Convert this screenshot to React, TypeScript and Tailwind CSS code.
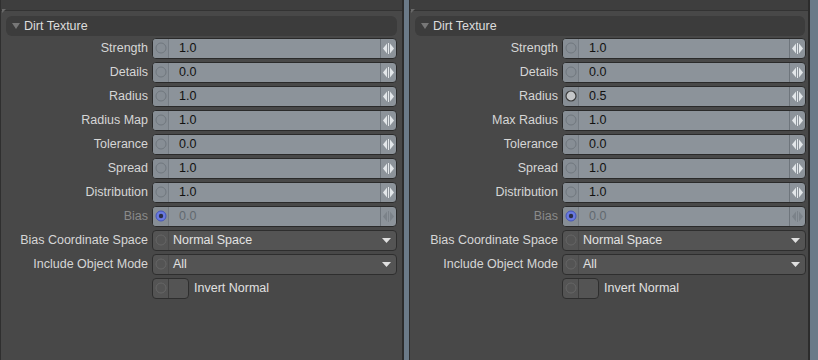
import React from "react";

type Row =
  | { kind: "num"; label: string; value: string; dot?: "ring" | "filled" | "blue"; disabled?: boolean }
  | { kind: "select"; label: string; value: string }
  | { kind: "check"; label: string };

const Arrows = ({ faded }: { faded?: boolean }) => (
  <svg width="11" height="11" viewBox="0 0 11 11">
    <polygon points="4,0.5 4,10.5 0,5.5" fill={faded ? "#7b8289" : "#e3e7ea"} />
    <rect x="5" y="0" width="1" height="11" fill={faded ? "#7b8289" : "#e3e7ea"} />
    <polygon points="7,0.5 7,10.5 11,5.5" fill={faded ? "#7b8289" : "#e3e7ea"} />
  </svg>
);

const Dot = ({ kind }: { kind?: "ring" | "filled" | "blue" }) => {
  if (kind === "filled")
    return (
      <svg width="12" height="12" viewBox="0 0 12 12">
        <circle cx="6" cy="6" r="5" fill="#c4c6c8" stroke="#3a3a3a" strokeWidth="1.2" />
      </svg>
    );
  if (kind === "blue")
    return (
      <svg width="12" height="12" viewBox="0 0 12 12">
        <circle cx="6" cy="6" r="5" fill="#6a7ae0" stroke="#4454b8" strokeWidth="1" />
        <circle cx="6" cy="6" r="2.2" fill="#2c2f46" />
      </svg>
    );
  return (
    <svg width="12" height="12" viewBox="0 0 12 12">
      <circle cx="6" cy="6" r="5" fill="none" stroke="#70777e" strokeWidth="1" />
    </svg>
  );
};

const DarkDot = () => (
  <svg width="12" height="12" viewBox="0 0 12 12">
    <circle cx="6" cy="6" r="5" fill="none" stroke="#666" strokeWidth="1" />
  </svg>
);

function Field({ row, fw }: { row: Row; fw: number }) {
  if (row.kind === "num") {
    return (
      <div
        className="flex h-[21px] rounded-[4px] border border-[#2a2a2a] bg-[#8c939a] overflow-hidden"
        style={{ width: fw }}
      >
        <div className="w-[16px] flex items-center justify-center border-r border-[#767d84] bg-[#878e95]">
          <Dot kind={row.dot} />
        </div>
        <div
          className={
            "flex-1 flex items-center pl-[10px] text-[12.5px] " +
            (row.disabled ? "text-[#62696f]" : "text-[#111111]")
          }
        >
          {row.value}
        </div>
        <div className="w-[16px] flex items-center justify-center border-l border-[#6e757c]">
          <Arrows faded={row.disabled} />
        </div>
      </div>
    );
  }
  if (row.kind === "select") {
    return (
      <div
        className="flex h-[21px] rounded-[4px] border border-[#2e2e2e] bg-[#545454] overflow-hidden"
        style={{ width: fw }}
      >
        <div className="w-[16px] flex items-center justify-center border-r border-[#4a4a4a]">
          <DarkDot />
        </div>
        <div className="flex-1 flex items-center pl-[4px] text-[12.5px] text-[#e2e2e2]">{row.value}</div>
        <div className="w-[16px] flex items-center justify-center pr-[4px]">
          <svg width="9" height="5" viewBox="0 0 9 5">
            <polygon points="0,0 9,0 4.5,5" fill="#e0e0e0" />
          </svg>
        </div>
      </div>
    );
  }
  return (
    <div className="flex items-center">
      <div className="flex h-[21px] w-[37px] rounded-[4px] border border-[#2e2e2e] bg-[#545454] overflow-hidden">
        <div className="w-[16px] flex items-center justify-center border-r border-[#3e3e3e]">
          <DarkDot />
        </div>
        <div className="flex-1" />
      </div>
      <span className="ml-[5px] text-[12.5px] text-[#e0e0e0]">{row.label}</span>
    </div>
  );
}

function Panel({ rows, lw, fw, hw }: { rows: Row[]; lw: number; fw: number; hw: number }) {
  return (
    <div className="flex flex-col h-full">
      <div className="h-[11px] bg-[#3e3e3e] border-b border-[#333333] relative">
        <svg className="absolute left-[1px] top-[9px]" width="4" height="4" viewBox="0 0 4 4">
          <polygon points="0,0 4,0 0,4" fill="#6a6a6a" />
        </svg>
      </div>
      <div className="pt-[5px] flex-1">
        <div
          className="ml-[5px] h-[20px] rounded-[6px] bg-[#3c3c3c] flex items-center"
          style={{ width: hw }}
        >
          <svg className="ml-[6px]" width="8" height="6" viewBox="0 0 8 6">
            <polygon points="0,0 8,0 4,6" fill="#777777" />
          </svg>
          <span className="ml-[4px] text-[12.5px] text-[#dcdcdc]">Dirt Texture</span>
        </div>
        {rows.map((r, i) => (
          <div key={i} className="flex h-[24px] items-center">
            <div
              className={
                "text-right pr-[4px] text-[12.5px] " +
                (r.kind === "num" && r.disabled ? "text-[#8a8a8a]" : "text-[#d6d6d6]")
              }
              style={{ width: lw }}
            >
              {r.kind === "check" ? "" : r.label}
            </div>
            <Field row={r} fw={fw} />
          </div>
        ))}
      </div>
    </div>
  );
}

const leftRows: Row[] = [
  { kind: "num", label: "Strength", value: "1.0" },
  { kind: "num", label: "Details", value: "0.0" },
  { kind: "num", label: "Radius", value: "1.0" },
  { kind: "num", label: "Radius Map", value: "1.0" },
  { kind: "num", label: "Tolerance", value: "0.0" },
  { kind: "num", label: "Spread", value: "1.0" },
  { kind: "num", label: "Distribution", value: "1.0" },
  { kind: "num", label: "Bias", value: "0.0", dot: "blue", disabled: true },
  { kind: "select", label: "Bias Coordinate Space", value: "Normal Space" },
  { kind: "select", label: "Include Object Mode", value: "All" },
  { kind: "check", label: "Invert Normal" },
];

const rightRows: Row[] = [
  { kind: "num", label: "Strength", value: "1.0" },
  { kind: "num", label: "Details", value: "0.0" },
  { kind: "num", label: "Radius", value: "0.5", dot: "filled" },
  { kind: "num", label: "Max Radius", value: "1.0" },
  { kind: "num", label: "Tolerance", value: "0.0" },
  { kind: "num", label: "Spread", value: "1.0" },
  { kind: "num", label: "Distribution", value: "1.0" },
  { kind: "num", label: "Bias", value: "0.0", dot: "blue", disabled: true },
  { kind: "select", label: "Bias Coordinate Space", value: "Normal Space" },
  { kind: "select", label: "Include Object Mode", value: "All" },
  { kind: "check", label: "Invert Normal" },
];

export default function App() {
  return (
    <div
      className="flex w-[818px] h-[360px] bg-[#484848] overflow-hidden"
      style={{ fontFamily: '"Liberation Sans", Arial, sans-serif' }}
    >
      <div className="w-[402px] h-full border-l border-[#2f2f2f] shrink-0">
        <Panel rows={leftRows} lw={151} fw={245} hw={391} />
      </div>
      <div className="w-[2px] h-full bg-[#2c2c2c] shrink-0" />
      <div className="w-[5px] h-full bg-[#6b7a88] shrink-0" />
      <div className="w-[1px] h-full bg-[#2c2c2c] shrink-0" />
      <div className="w-[398px] h-full shrink-0">
        <Panel rows={rightRows} lw={152} fw={244} hw={390} />
      </div>
      <div className="w-[2px] h-full bg-[#2c2c2c] shrink-0" />
      <div className="flex-1 h-full bg-[#6b7a88]" />
    </div>
  );
}
